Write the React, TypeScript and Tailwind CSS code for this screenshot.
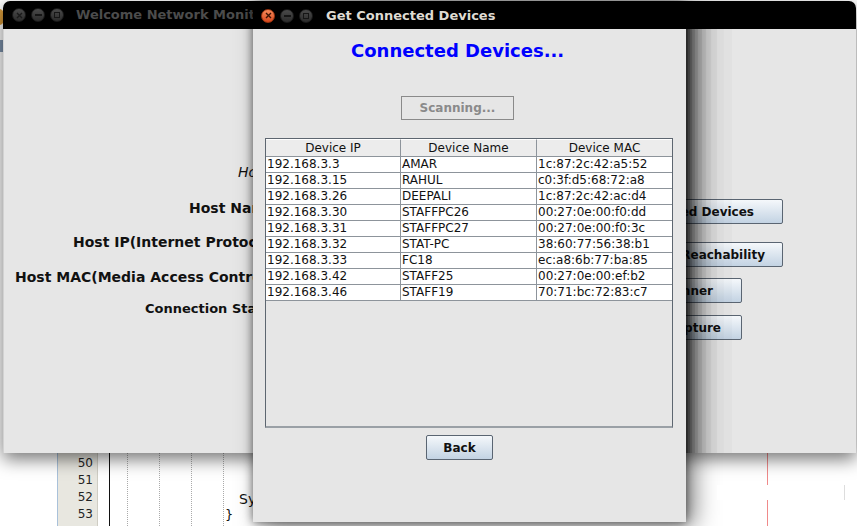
import React from "react";

const devices = [
  ["192.168.3.3", "AMAR", "1c:87:2c:42:a5:52"],
  ["192.168.3.15", "RAHUL", "c0:3f:d5:68:72:a8"],
  ["192.168.3.26", "DEEPALI", "1c:87:2c:42:ac:d4"],
  ["192.168.3.30", "STAFFPC26", "00:27:0e:00:f0:dd"],
  ["192.168.3.31", "STAFFPC27", "00:27:0e:00:f0:3c"],
  ["192.168.3.32", "STAT-PC", "38:60:77:56:38:b1"],
  ["192.168.3.33", "FC18", "ec:a8:6b:77:ba:85"],
  ["192.168.3.42", "STAFF25", "00:27:0e:00:ef:b2"],
  ["192.168.3.46", "STAFF19", "70:71:bc:72:83:c7"],
];

// dialog shadow falling on the main window, darkest at the dialog edge
const shadowSteps = [
  "w-[2px] bg-[rgba(0,0,0,0.62)]",
  "w-[2px] bg-[rgba(0,0,0,0.52)]",
  "w-[2px] bg-[rgba(0,0,0,0.44)]",
  "w-[3px] bg-[rgba(0,0,0,0.36)]",
  "w-[3px] bg-[rgba(0,0,0,0.29)]",
  "w-[4px] bg-[rgba(0,0,0,0.22)]",
  "w-[4px] bg-[rgba(0,0,0,0.16)]",
  "w-[5px] bg-[rgba(0,0,0,0.11)]",
  "w-[6px] bg-[rgba(0,0,0,0.07)]",
  "w-[7px] bg-[rgba(0,0,0,0.04)]",
  "w-[8px] bg-[rgba(0,0,0,0.02)]",
];

const font = { fontFamily: '"DejaVu Sans", "Liberation Sans", sans-serif' };

function WinButtons({ active }: { active: boolean }) {
  const dim = "bg-gradient-to-b from-[#4a4a4a] to-[#2c2c2c] border border-[#1a1a1a]";
  return (
    <div className="flex items-center gap-[5px]">
      <div
        className={`w-[14px] h-[14px] rounded-full flex items-center justify-center ${
          active ? "bg-gradient-to-b from-[#f58a5a] to-[#d8461a] border border-[#9c3410]" : dim
        }`}
      >
        <svg width="7" height="7" viewBox="0 0 7 7">
          <path d="M1 1L6 6M6 1L1 6" stroke={active ? "#3b1405" : "#1a1a1a"} strokeWidth="1.4" />
        </svg>
      </div>
      <div className={`w-[14px] h-[14px] rounded-full flex items-center justify-center ${dim}`}>
        <div className="w-[7px] h-[2px] bg-[#161616]" />
      </div>
      <div className={`w-[14px] h-[14px] rounded-full flex items-center justify-center ${dim}`}>
        <div className="w-[6px] h-[6px] border-[1.5px] border-[#161616]" />
      </div>
    </div>
  );
}

function MainButton({ label, width, pr, mt }: { label: string; width: string; pr: string; mt: string }) {
  return (
    <div
      className={`${width} ${mt} ${pr} h-[25px] flex items-center justify-end border border-[#5a6572] rounded-[2px] bg-gradient-to-b from-[#f5f8fb] to-[#c3d3e3] text-[12px] font-bold text-[#111] whitespace-nowrap overflow-hidden`}
    >
      {label}
    </div>
  );
}

export default function App() {
  return (
    <div className="relative w-[857px] h-[526px] overflow-hidden bg-white" style={font}>
      {/* desktop scrap on the far left */}
      <div className="absolute left-[-6px] top-[9px] w-[10px] h-[16px] rounded-full bg-[#d79a3a]" />
      <div className="absolute left-0 top-[40px] w-[3px] h-[12px] bg-[#7d93ad]" />

      {/* IDE code editor behind the windows */}
      <div className="absolute left-[57px] top-[440px] w-[800px] h-[86px] flex">
        <div className="w-[41px] h-full bg-[#e8e7e0] border-l border-[#a9c1da] border-r border-r-[#cfcdc4] flex flex-col items-end pr-[4px] pt-[15px] text-[12px] leading-[17px] text-[#222]">
          <span>50</span>
          <span>51</span>
          <span>52</span>
          <span>53</span>
        </div>
        <div className="flex-1 flex h-full">
          <div className="w-[11px]" />
          <div className="w-px h-full bg-[#111]" />
          <div className="w-[17px]" />
          <div className="h-full border-l border-dotted border-[#aaa]" />
          <div className="w-[31px]" />
          <div className="h-full border-l border-dotted border-[#aaa]" />
          <div className="w-[31px]" />
          <div className="h-full border-l border-dotted border-[#aaa]" />
          <div className="w-[31px]" />
          <div className="h-full border-l border-dotted border-[#aaa] relative">
            <span className="absolute left-[1px] top-[65px] text-[13px] text-[#111]">{"}"}</span>
            <span className="absolute left-[15px] top-[49px] text-[14px] text-[#111]">Sy</span>
          </div>
          <div className="w-[543px]" />
          <div className="w-px h-full bg-[#f08a8a]" />
        </div>
      </div>
      <div className="absolute z-30 left-[717px] top-[485px] w-[128px] h-[15px] bg-white border-r border-[#ddd]" />

      {/* Main window */}
      <div className="absolute z-10 left-[3px] top-[1px] w-[853px] h-[452px] flex flex-col shadow-[0_6px_18px_rgba(0,0,0,0.55)] rounded-t-[7px]">
        <div className="h-[28px] bg-black rounded-t-[7px] flex items-center pl-[9px]">
          <WinButtons active={false} />
          <span className="ml-[12px] text-[13px] font-bold text-[#4c4c4c] whitespace-nowrap">
            Welcome Network Monitor
          </span>
        </div>
        <div className="flex-1 bg-[#e6e6e6] border-l border-[#d2d2d2] flex">
          <div className="w-[600px] flex flex-col text-[#111] whitespace-nowrap">
            <div className="mt-[135px] h-[16px] leading-[16px] pl-[234px] text-[14px] italic">Host Details</div>
            <div className="mt-[20px] h-[16px] leading-[16px] pl-[185px] text-[14px] font-bold">Host Name :</div>
            <div className="mt-[18px] h-[16px] leading-[16px] pl-[69px] text-[14px] font-bold">Host IP(Internet Protocol) :</div>
            <div className="mt-[19px] h-[16px] leading-[16px] pl-[11px] text-[14px] font-bold">Host MAC(Media Access Control) :</div>
            <div className="mt-[16px] h-[16px] leading-[16px] pl-[141px] text-[13px] font-bold">Connection Status :</div>
          </div>
          <div className="flex flex-col">
            <MainButton label="Get Connected Devices" width="w-[179px]" pr="pr-[28px]" mt="mt-[170px]" />
            <MainButton label="Check Reachability" width="w-[179px]" pr="pr-[17px]" mt="mt-[18px]" />
            <MainButton label="Port Scanner" width="w-[138px]" pr="pr-[28px]" mt="mt-[11px]" />
            <MainButton label="Packet Capture" width="w-[138px]" pr="pr-[20px]" mt="mt-[12px]" />
          </div>
        </div>
      </div>

      {/* dialog's cast shadow over the main window */}
      <div className="absolute z-[15] left-[686px] top-[29px] h-[424px] flex">
        {shadowSteps.map((s) => (
          <div key={s} className={`h-full ${s}`} />
        ))}
      </div>

      {/* Get Connected Devices dialog */}
      <div className="absolute z-20 left-[253px] top-[2px] w-[433px] h-[520px] flex flex-col rounded-t-[7px] shadow-[0_0_10px_rgba(0,0,0,0.55),8px_4px_24px_rgba(0,0,0,0.5)]">
        <div className="h-[27px] bg-black rounded-t-[7px] flex items-center pl-[8px]">
          <WinButtons active={true} />
          <span className="ml-[13px] text-[13px] font-bold text-[#dfdbd2] whitespace-nowrap">Get Connected Devices</span>
        </div>
        <div className="flex-1 bg-[#e6e6e6] flex flex-col">
          <div className="mt-[11px] ml-[98px] leading-[22px] text-[18px] font-bold text-[#0000ff]">Connected Devices...</div>
          <div className="mt-[34px] ml-[148px] w-[113px] h-[24px] border border-[#8a8a8a] flex items-center justify-center text-[12px] font-bold text-[#8a8a8a]">
            Scanning...
          </div>
          <div className="mt-[18px] ml-[12px] w-[408px] h-[290px] border border-[#5d6670] border-b-2 border-b-[#9aa0a6] flex flex-col text-[12px] text-[#111]">
            <div className="grid grid-cols-[135px_136px_1fr] h-[18px] bg-[#ececec] border-b border-[#8d949b]">
              {["Device IP", "Device Name", "Device MAC"].map((h, i) => (
                <div
                  key={h}
                  className={`flex items-center justify-center leading-[17px] border-t border-white ${i < 2 ? "border-r border-r-[#8d949b]" : ""}`}
                >
                  {h}
                </div>
              ))}
            </div>
            {devices.map((row) => (
              <div key={row[0]} className="grid grid-cols-[135px_136px_1fr] h-[16px] bg-white border-b border-[#8d949b]">
                {row.map((cell, i) => (
                  <div
                    key={i}
                    className={`pl-[1px] leading-[15px] whitespace-nowrap overflow-hidden ${i < 2 ? "border-r border-[#8d949b]" : ""}`}
                  >
                    {cell}
                  </div>
                ))}
              </div>
            ))}
          </div>
          <div className="mt-[7px] ml-[173px] w-[67px] h-[25px] border border-[#5a6572] rounded-[2px] bg-gradient-to-b from-[#f5f8fb] to-[#c3d3e3] flex items-center justify-center text-[12px] font-bold text-[#111]">
            Back
          </div>
        </div>
      </div>
    </div>
  );
}
